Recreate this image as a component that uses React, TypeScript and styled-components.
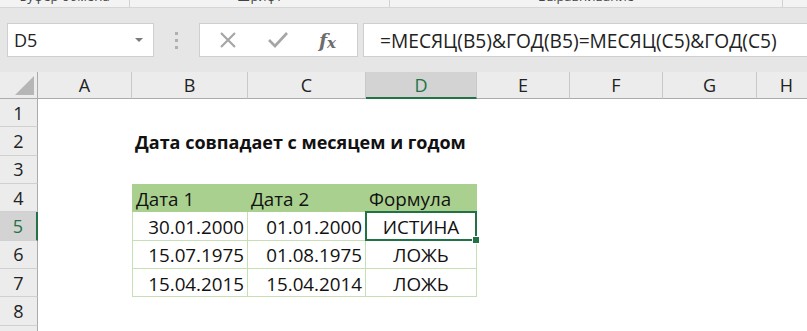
import styled, { createGlobalStyle } from "styled-components";

const GlobalStyle = createGlobalStyle`
  html, body {
    margin: 0;
    padding: 0;
    background: #ffffff;
    overflow: hidden;
  }
`;

const GREEN = "#217346";
const TABLE_LINE = "#c6e0b4";

const columns = ["A", "B", "C", "D", "E", "F", "G", "H"];
const rows = [1, 2, 3, 4, 5, 6, 7, 8, 9];

type CellData = {
  text: string;
  align?: "left" | "right" | "center";
  bold?: boolean;
  head?: boolean;
  table?: boolean;
  first?: boolean;
  selected?: boolean;
};

const data: Record<string, CellData> = {
  B2: { text: "Дата совпадает с месяцем и годом", bold: true },
  B4: { text: "Дата 1", head: true, table: true, first: true },
  C4: { text: "Дата 2", head: true, table: true },
  D4: { text: "Формула", head: true, table: true },
  B5: { text: "30.01.2000", align: "right", table: true, first: true },
  C5: { text: "01.01.2000", align: "right", table: true },
  D5: { text: "ИСТИНА", align: "center", table: true, selected: true },
  B6: { text: "15.07.1975", align: "right", table: true, first: true },
  C6: { text: "01.08.1975", align: "right", table: true },
  D6: { text: "ЛОЖЬ", align: "center", table: true },
  B7: { text: "15.04.2015", align: "right", table: true, first: true },
  C7: { text: "15.04.2014", align: "right", table: true },
  D7: { text: "ЛОЖЬ", align: "center", table: true },
};

const groups = [
  { label: "Буфер обмена", width: 130 },
  { label: "Шрифт", width: 260 },
  { label: "Выравнивание", width: 393 },
  { label: "", width: 24 },
];

export default function App() {
  return (
    <>
      <GlobalStyle />
      <Window>
        <RibbonStrip>
          {groups.map((g, i) => (
            <RibbonGroup key={i} $width={g.width}>
              <GroupLabel>{g.label}</GroupLabel>
            </RibbonGroup>
          ))}
        </RibbonStrip>

        <FormulaBar>
          <NameBox>
            <span>D5</span>
            <Caret />
          </NameBox>
          <Grip>
            <i />
            <i />
            <i />
          </Grip>
          <FxButtons>
            <svg width="20" height="20" viewBox="0 0 20 20">
              <path d="M3 3 L17 17 M17 3 L3 17" stroke="#a6a6a6" strokeWidth="2.2" fill="none" />
            </svg>
            <svg width="22" height="20" viewBox="0 0 22 20">
              <path d="M2 10 L8 16 L20 3" stroke="#a6a6a6" strokeWidth="2.6" fill="none" />
            </svg>
            <FxLabel>
              f<sub>x</sub>
            </FxLabel>
          </FxButtons>
          <FormulaInput>=МЕСЯЦ(B5)&amp;ГОД(B5)=МЕСЯЦ(C5)&amp;ГОД(C5)</FormulaInput>
        </FormulaBar>

        <Sheet>
          <Corner />
          {columns.map((c) => (
            <ColHeader key={c} $selected={c === "D"}>
              {c}
            </ColHeader>
          ))}
          {rows.map((r) => (
            <Row key={r} r={r} />
          ))}
        </Sheet>
      </Window>
    </>
  );
}

function Row({ r }: { r: number }) {
  return (
    <>
      <RowHeader $selected={r === 5}>{r}</RowHeader>
      {columns.map((c) => {
        const d = data[`${c}${r}`];
        if (!d) return <Cell key={c} />;
        return (
          <Cell
            key={c}
            $align={d.align ?? "left"}
            $bold={d.bold}
            $head={d.head}
            $table={d.table}
            $first={d.first}
            $selected={d.selected}
          >
            {d.text}
          </Cell>
        );
      })}
    </>
  );
}

const Window = styled.div`
  width: 807px;
  height: 331px;
  overflow: hidden;
  display: flex;
  flex-direction: column;
  font-family: "Open Sans", "Liberation Sans", sans-serif;
  color: #1f1f1f;
  & > * {
    flex-shrink: 0;
  }
`;

const RibbonStrip = styled.div`
  display: flex;
  height: 8px;
  background: #f3f3f3;
  border-bottom: 1px solid #d6d6d6;
  box-sizing: border-box;
  overflow: hidden;
`;

const RibbonGroup = styled.div<{ $width: number }>`
  flex: 0 0 ${(p) => p.$width}px;
  border-right: 1px solid #d2d2d2;
  display: flex;
  justify-content: center;
  align-items: flex-end;
  box-sizing: border-box;
  &:last-child {
    border-right: none;
  }
`;

const GroupLabel = styled.span`
  font-size: 13px;
  line-height: 13px;
  color: #444;
  margin-bottom: 4px;
  white-space: nowrap;
`;

const FormulaBar = styled.div`
  height: 64px;
  background: #e6e6e6;
  display: flex;
  align-items: center;
  padding: 0 0 0 7px;
  box-sizing: border-box;
`;

const NameBox = styled.div`
  width: 147px;
  height: 34px;
  background: #fff;
  border: 1px solid #cfcfcf;
  box-sizing: border-box;
  display: flex;
  align-items: center;
  justify-content: space-between;
  padding: 0 10px 0 6px;
  font-size: 18px;
  color: #222;
`;

const Caret = styled.div`
  width: 0;
  height: 0;
  border-left: 4px solid transparent;
  border-right: 4px solid transparent;
  border-top: 4px solid #7a7a7a;
`;

const Grip = styled.div`
  width: 45px;
  display: flex;
  flex-direction: column;
  align-items: center;
  gap: 4px;
  i {
    width: 3px;
    height: 3px;
    background: #b0b0b0;
  }
`;

const FxButtons = styled.div`
  width: 159px;
  height: 34px;
  background: #fff;
  border: 1px solid #cfcfcf;
  box-sizing: border-box;
  display: grid;
  grid-template-columns: 52px 52px 1fr;
  align-items: center;
  justify-items: center;
  margin-right: 5px;
  svg:first-child {
    margin-left: 4px;
  }
`;

const FxLabel = styled.span`
  font-family: "DejaVu Serif", "Liberation Serif", serif;
  font-style: italic;
  font-weight: bold;
  font-size: 19px;
  color: #6d6d6d;
  margin-right: 6px;
  sub {
    font-size: 15px;
    vertical-align: -1px;
  }
`;

const FormulaInput = styled.div`
  flex: 1;
  height: 34px;
  background: #fff;
  border: 1px solid #cfcfcf;
  border-right: none;
  box-sizing: border-box;
  display: flex;
  align-items: center;
  padding-left: 16px;
  font-size: 19.2px;
  color: #222;
  white-space: nowrap;
  overflow: hidden;
`;

const Sheet = styled.div`
  display: grid;
  grid-template-columns: 38px 94px 116px 118px 111px 93px 93px 94px 60px;
  grid-template-rows: 27px repeat(9, 28.33px);
  background: #fff;
`;

const Corner = styled.div`
  background: #ececec;
  border-right: 1px solid #ababab;
  border-bottom: 1px solid #ababab;
  box-sizing: border-box;
  position: relative;
  &::after {
    content: "";
    position: absolute;
    right: 3px;
    bottom: 3px;
    width: 0;
    height: 0;
    border-left: 19px solid transparent;
    border-bottom: 19px solid #b6b6b6;
  }
`;

const ColHeader = styled.div<{ $selected?: boolean }>`
  background: ${(p) => (p.$selected ? "#d3d3d3" : "#ececec")};
  border-right: 1px solid #c9c9c9;
  border-bottom: ${(p) => (p.$selected ? `2px solid ${GREEN}` : "1px solid #ababab")};
  box-sizing: border-box;
  display: flex;
  align-items: center;
  justify-content: center;
  font-size: 18px;
  color: ${(p) => (p.$selected ? GREEN : "#222")};
  padding-top: ${(p) => (p.$selected ? "1px" : "0")};
`;

const RowHeader = styled.div<{ $selected?: boolean }>`
  background: ${(p) => (p.$selected ? "#d3d3d3" : "#ececec")};
  border-right: ${(p) => (p.$selected ? `2px solid ${GREEN}` : "1px solid #ababab")};
  border-bottom: 1px solid #d0d0d0;
  box-sizing: border-box;
  display: flex;
  align-items: center;
  justify-content: center;
  font-size: 18px;
  color: ${(p) => (p.$selected ? GREEN : "#222")};
`;

const Cell = styled.div<{
  $align?: "left" | "right" | "center";
  $bold?: boolean;
  $head?: boolean;
  $table?: boolean;
  $first?: boolean;
  $selected?: boolean;
}>`
  position: relative;
  box-sizing: border-box;
  display: flex;
  align-items: center;
  justify-content: ${(p) =>
    p.$align === "right" ? "flex-end" : p.$align === "center" ? "center" : "flex-start"};
  padding: 2px 3px 0 3px;
  font-size: ${(p) => (p.$bold ? "18px" : "18.8px")};
  font-weight: ${(p) => (p.$bold ? 700 : 400)};
  white-space: nowrap;
  overflow: visible;
  color: #111;
  background: ${(p) => (p.$head ? "#a9d08e" : "transparent")};
  border-right: ${(p) => (p.$table ? `1px solid ${p.$head ? "#a9d08e" : TABLE_LINE}` : "none")};
  border-bottom: ${(p) => (p.$table ? `1px solid ${p.$head ? "#a9d08e" : TABLE_LINE}` : "none")};
  border-left: ${(p) => (p.$first ? `1px solid ${p.$head ? "#a9d08e" : TABLE_LINE}` : "none")};
  z-index: ${(p) => (p.$bold ? 1 : "auto")};
  ${(p) =>
    p.$selected &&
    `
    &::after {
      content: "";
      position: absolute;
      left: -1px;
      top: -1px;
      right: -1px;
      bottom: -1px;
      border: 2px solid ${GREEN};
    }
    &::before {
      content: "";
      position: absolute;
      right: -4px;
      bottom: -4px;
      width: 6px;
      height: 6px;
      background: ${GREEN};
      border: 1px solid #fff;
      z-index: 2;
    }
  `}
`;
